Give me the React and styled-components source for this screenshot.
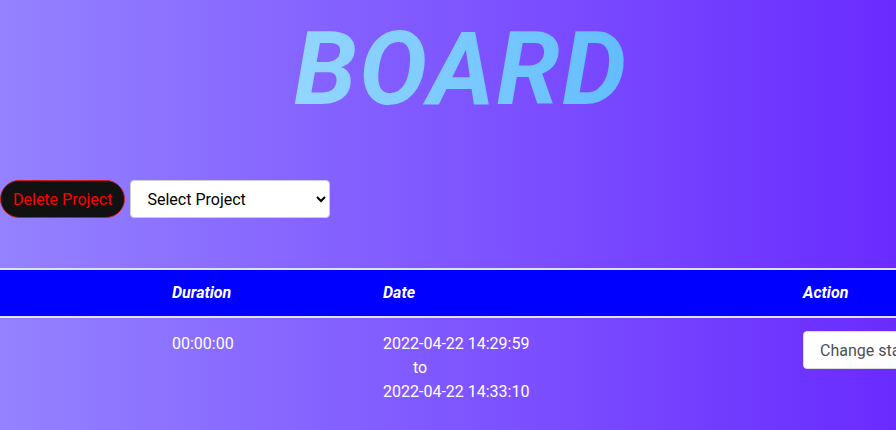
import React from "react";
import styled, { createGlobalStyle } from "styled-components";

const Global = createGlobalStyle`
  html, body { margin: 0; padding: 0; }
  body {
    min-height: 430px;
    overflow-x: hidden;
    font-family: Roboto, "Noto Sans", sans-serif;
    background: linear-gradient(to right, #9482ff, #6a2bff);
    color: #fff;
  }
`;

const Page = styled.div`
  width: 922px;
  min-height: 430px;
`;

const Title = styled.h1`
  margin: 0;
  padding-top: 14px;
  text-align: center;
  font-family: Roboto, sans-serif;
  font-style: italic;
  font-weight: 700;
  font-size: 102px;
  line-height: 110px;
  letter-spacing: 2px;
  background: linear-gradient(to right, #93d7ff, #62bdfe);
  -webkit-background-clip: text;
  background-clip: text;
  color: transparent;
  width: max-content;
  margin-left: auto;
  margin-right: auto;
`;

const Controls = styled.div`
  display: flex;
  align-items: center;
  gap: 5px;
  margin-top: 56px;
`;

const DeleteButton = styled.button`
  height: 38px;
  padding: 0 12px;
  background: #111;
  color: #ff0000;
  border: 1px solid #c81c1c;
  border-radius: 19px;
  font-family: Roboto, sans-serif;
  font-size: 16px;
  cursor: pointer;
`;

const Select = styled.select`
  width: 200px;
  height: 38px;
  padding: 0 8px 0 12px;
  background: #fff;
  color: #000;
  border: 1px solid #ccc;
  border-radius: 4px;
  font-family: Roboto, sans-serif;
  font-size: 16px;
`;

const Table = styled.table`
  margin-top: 50px;
  width: 922px;
  border-collapse: collapse;
  table-layout: fixed;
`;

const HeadRow = styled.tr`
  background: #0000ff;
  border-top: 2px solid #e2e2ee;
  border-bottom: 2px solid #e2e2ee;
`;

const Th = styled.th`
  padding: 12px;
  text-align: left;
  font-family: Roboto, sans-serif;
  font-style: italic;
  font-weight: 700;
  font-size: 16px;
  line-height: 22px;
  color: #fff;
`;

const Td = styled.td`
  padding: 14px 12px 12px;
  vertical-align: top;
  font-size: 16px;
  line-height: 24px;
  color: #fff;
`;

const Line = styled.div`
  padding-left: ${(p) => p.$indent || 0}px;
`;

const StatusButton = styled.button`
  height: 38px;
  padding: 0 16px;
  background: #fff;
  color: #495057;
  border: 1px solid #ddd;
  border-radius: 4px;
  font-family: Roboto, sans-serif;
  font-size: 16px;
  white-space: nowrap;
  margin-top: -1px;
`;

export default function App() {
  return (
    <>
      <Global />
      <Page>
        <Title>BOARD</Title>
        <Controls>
          <DeleteButton>Delete Project</DeleteButton>
          <Select defaultValue="">
            <option value="">Select Project</option>
          </Select>
        </Controls>
        <Table>
          <colgroup>
            <col style={{ width: 160 }} />
            <col style={{ width: 211 }} />
            <col style={{ width: 420 }} />
            <col style={{ width: 131 }} />
          </colgroup>
          <thead>
            <HeadRow>
              <Th></Th>
              <Th>Duration</Th>
              <Th>Date</Th>
              <Th>Action</Th>
            </HeadRow>
          </thead>
          <tbody>
            <tr>
              <Td></Td>
              <Td>00:00:00</Td>
              <Td>
                <Line>2022-04-22 14:29:59</Line>
                <Line $indent={30}>to</Line>
                <Line>2022-04-22 14:33:10</Line>
              </Td>
              <Td>
                <StatusButton>Change status</StatusButton>
              </Td>
            </tr>
          </tbody>
        </Table>
      </Page>
    </>
  );
}
